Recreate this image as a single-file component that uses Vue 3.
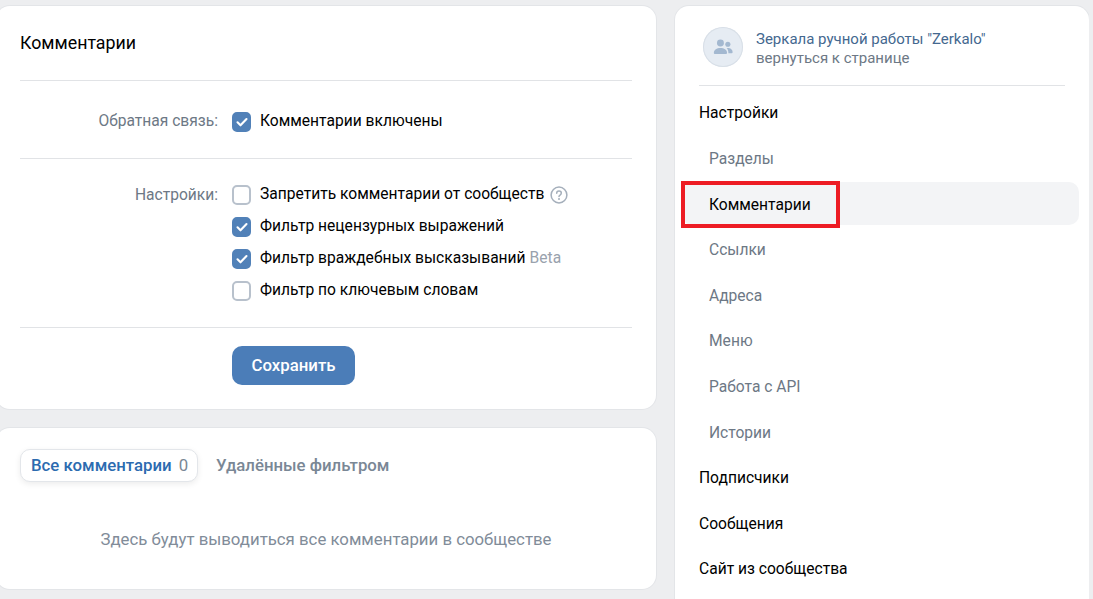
<script setup>
const settings = [
  { text: 'Запретить комментарии от сообществ', on: false, help: true },
  { text: 'Фильтр нецензурных выражений', on: true },
  { text: 'Фильтр враждебных высказываний', on: true, beta: true },
  { text: 'Фильтр по ключевым словам', on: false }
]
const menu = [
  { text: 'Настройки', kind: 'top' },
  { text: 'Разделы', kind: 'sub' },
  { text: 'Комментарии', kind: 'active' },
  { text: 'Ссылки', kind: 'sub' },
  { text: 'Адреса', kind: 'sub' },
  { text: 'Меню', kind: 'sub' },
  { text: 'Работа с API', kind: 'sub' },
  { text: 'Истории', kind: 'sub' },
  { text: 'Подписчики', kind: 'top' },
  { text: 'Сообщения', kind: 'top' },
  { text: 'Сайт из сообщества', kind: 'top' }
]
</script>

<template>
  <div class="page">
    <main class="left">
      <section class="card form">
        <h1 class="title">Комментарии</h1>
        <div class="row feedback">
          <div class="label">Обратная связь:</div>
          <div class="opts">
            <div class="opt">
              <span class="box on">
                <svg viewBox="0 0 12 12" width="12" height="12"><path d="M1.5 6.3l3 3 6-6.3" fill="none" stroke="#fff" stroke-width="2.1" stroke-linecap="round" stroke-linejoin="round"/></svg>
              </span>
              <span class="opt-text">Комментарии включены</span>
            </div>
          </div>
        </div>
        <div class="row prefs">
          <div class="label">Настройки:</div>
          <div class="opts">
            <div v-for="s in settings" :key="s.text" class="opt">
              <span class="box" :class="{ on: s.on }">
                <svg v-if="s.on" viewBox="0 0 12 12" width="12" height="12"><path d="M1.5 6.3l3 3 6-6.3" fill="none" stroke="#fff" stroke-width="2.1" stroke-linecap="round" stroke-linejoin="round"/></svg>
              </span>
              <span class="opt-text">{{ s.text }}</span>
              <svg v-if="s.help" class="help" viewBox="0 0 18 18" width="18" height="18">
                <circle cx="9" cy="9" r="7.9" fill="none" stroke="#a5afbb" stroke-width="1.5"/>
                <path d="M6.7 7.2c0-1.300 1-2.200 2.300-2.200s2.300.9 2.300 2.100c0 1-.6 1.500-1.300 2-.6.4-1 .8-1 1.500" fill="none" stroke="#a5afbb" stroke-width="1.5" stroke-linecap="round"/>
                <circle cx="9" cy="13" r="1" fill="#a5afbb"/>
              </svg>
              <span v-if="s.beta" class="beta opt-text">Beta</span>
            </div>
          </div>
        </div>
        <div class="actions">
          <button class="save">Сохранить</button>
        </div>
      </section>

      <section class="card comments">
        <div class="tabs">
          <div class="tab active">Все комментарии <span class="count">0</span></div>
          <div class="tab">Удалённые фильтром</div>
        </div>
        <p class="empty">Здесь будут выводиться все комментарии в сообществе</p>
      </section>
    </main>

    <aside class="card side">
      <header class="group">
        <div class="avatar">
          <svg viewBox="0 0 24 24" width="22" height="22">
            <circle cx="9.200" cy="7.600" r="3.800" fill="#a3b8d0"/>
            <path d="M2 18.600c0-3.600 3.300-5.400 7.200-5.400s7.200 1.800 7.200 5.400c0 .6-.4 1-1 1H3c-.6 0-1-.4-1-1z" fill="#a3b8d0"/>
            <circle cx="17.300" cy="9" r="2.800" fill="#a3b8d0"/>
            <path d="M16 13.200c3.300-.4 6.500 1 6.500 4.600 0 .6-.4 1-1 1h-3.600c0-2.300-.6-4.200-1.900-5.600z" fill="#a3b8d0"/>
          </svg>
        </div>
        <div class="group-text">
          <div class="group-name">Зеркала ручной работы "Zerkalo"</div>
          <div class="group-back">вернуться к странице</div>
        </div>
      </header>
      <nav class="menu">
        <div v-for="m in menu" :key="m.text" class="item" :class="m.kind">
          {{ m.text }}
          <span v-if="m.kind === 'active'" class="mark"></span>
        </div>
      </nav>
    </aside>
  </div>
</template>

<style>
html, body {
  margin: 0;
  background: #edeef0;
  overflow: hidden;
}
</style>

<style scoped>
.page {
  display: flex;
  align-items: flex-start;
  gap: 19px;
  width: 1093px;
  height: 599px;
  margin-left: -4px;
  padding-top: 6px;
  box-sizing: border-box;
  background: #edeef0;
  font-family: Roboto, "Liberation Sans", sans-serif;
  font-size: 15.6px;
  color: #000;
  overflow: hidden;
}
.left {
  width: 660px;
  flex: none;
  display: flex;
  flex-direction: column;
  gap: 19px;
}
.card {
  background: #fff;
  border-radius: 14px;
  box-shadow: 0 0 0 1px #e3e5e8;
  box-sizing: border-box;
}
.form {
  height: 403px;
  padding: 0 24px;
}
.title {
  margin: 0;
  height: 74px;
  line-height: 74px;
  font-size: 17.8px;
  font-weight: 400;
  border-bottom: 1px solid #e1e3e6;
}
.row {
  display: flex;
  border-bottom: 1px solid #e1e3e6;
}
.feedback {
  padding: 28px 0 24px;
  height: 25px;
}
.opt-text {
  margin-top: -2px;
}
.prefs {
  padding: 24px 0 21px;
  height: 123px;
}
.label {
  width: 198px;
  text-align: right;
  color: #6d7885;
  line-height: 32px;
  margin-top: -4px;
  flex: none;
}
.feedback .label { margin-top: 0; line-height: 25px; }
.opts {
  margin-left: 14px;
  display: flex;
  flex-direction: column;
}
.opt {
  display: flex;
  flex: none;
  align-items: center;
  height: 32px;
  white-space: nowrap;
  margin-top: -4px;
  margin-bottom: 4px;
}
.feedback .opt { height: 25px; margin: 0; }
.box {
  width: 19px;
  height: 20px;
  margin-right: 9px;
  border: 2px solid #b8c1cc;
  border-radius: 5px;
  box-sizing: border-box;
  display: flex;
  align-items: center;
  justify-content: center;
  background: #fff;
  flex: none;
}
.box.on {
  background: #5181b8;
  border-color: #5181b8;
}
.help {
  margin-left: 6px;
}
.beta {
  margin-left: 4px;
  color: #99a2ad;
}
.actions {
  padding: 18px 0 0 212px;
}
.save {
  display: block;
  width: 123px;
  height: 39px;
  border: 0;
  border-radius: 10px;
  background: #4b7db8;
  color: #fff;
  font: 500 16.8px Roboto, "Liberation Sans", sans-serif;
  padding: 0 0 2px;
}
.comments {
  height: 161px;
  padding: 21px 24px 0;
}
.tabs {
  display: flex;
  align-items: center;
  gap: 18px;
}
.tab {
  height: 33px;
  line-height: 33px;
  font-size: 16.8px;
  font-weight: 500;
  color: #7a8795;
  white-space: nowrap;
}
.tab.active {
  width: 178px;
  padding-left: 10px;
  box-sizing: border-box;
  background: #fff;
  border-radius: 10px;
  border: 1px solid #e3e6ea;
  line-height: 31px;
  box-shadow: 0 2px 6px rgba(0, 0, 0, .08);
  color: #2c6bb0;
}
.count {
  color: #7a8795;
  font-weight: 400;
  margin-left: 3px;
}
.empty {
  margin: 45px 0 0;
  text-align: center;
  font-size: 16.8px;
  line-height: 24px;
  color: #818c99;
}
.side {
  width: 414px;
  height: 640px;
  flex: none;
  padding: 0 7px;
}
.group {
  display: flex;
  align-items: flex-start;
  gap: 13px;
  height: 58px;
  padding: 21px 0 0 4px;
  margin: 0 17px;
  border-bottom: 1px solid #e1e3e6;
}
.avatar {
  width: 40px;
  height: 40px;
  border-radius: 50%;
  background: #e6ecf3;
  box-shadow: inset 0 0 0 1px #d8dfe7;
  display: flex;
  align-items: center;
  justify-content: center;
  flex: none;
}
.group-text {
  padding-top: 3px;
  line-height: 19px;
  font-size: 15px;
}
.group-name { color: #44688f; }
.group-back { color: #6d7885; }
.menu {
  display: flex;
  flex-direction: column;
  padding-top: 5px;
}
.item {
  position: relative;
  height: 45.6px;
  line-height: 45.6px;
  padding-left: 17px;
  box-sizing: border-box;
}
.item.sub {
  padding-left: 27px;
  color: #6d7885;
}
.item.active {
  height: 43px;
  line-height: 46px;
  margin: -0.2px 3px 3.3px 0;
  padding-left: 27px;
  background: #f3f4f6;
  border-radius: 10px;
}
.mark {
  position: absolute;
  left: -1px;
  top: -1px;
  width: 159px;
  height: 47px;
  border: 4px solid #ed1c24;
  box-sizing: border-box;
}
</style>
